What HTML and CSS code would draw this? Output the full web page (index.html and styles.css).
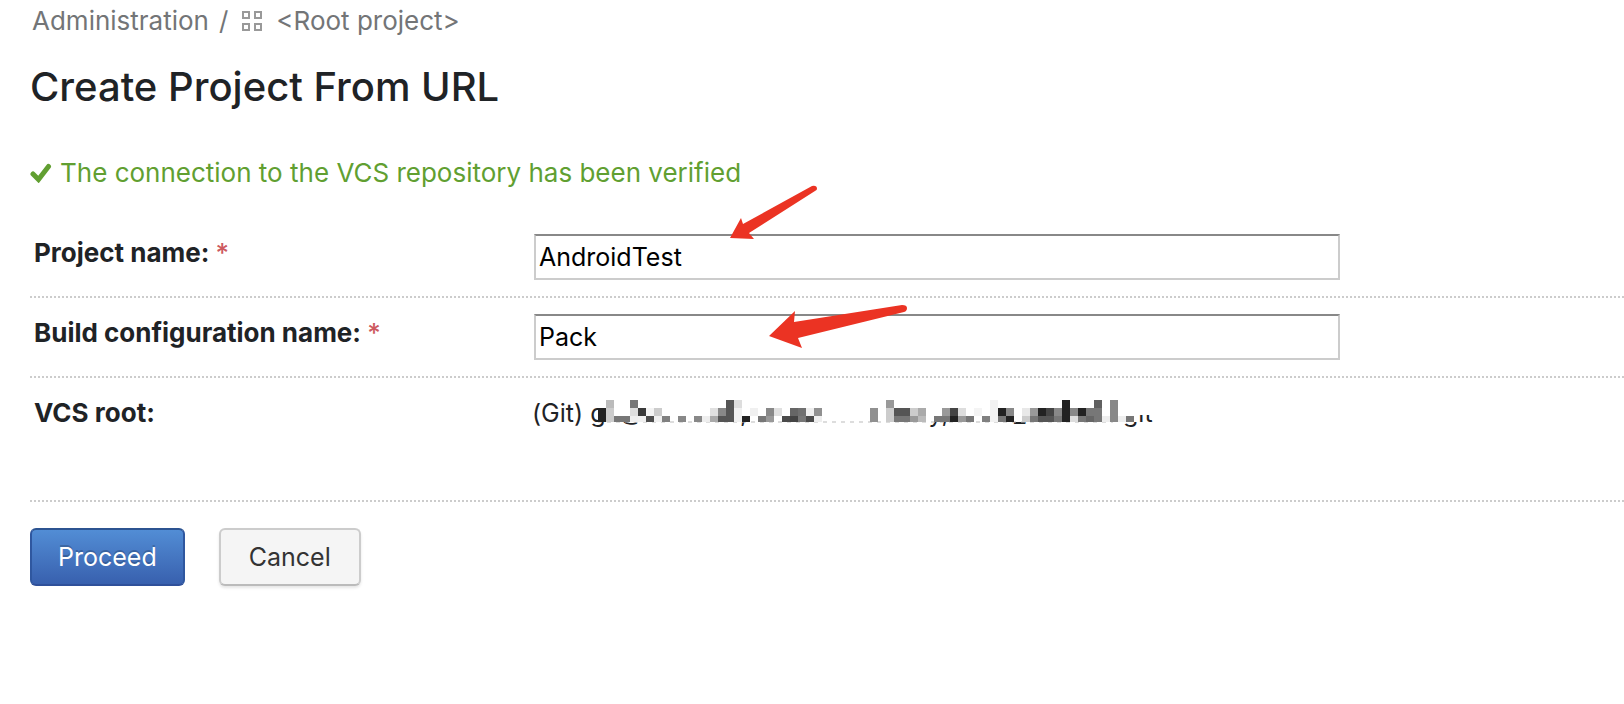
FILE: index.html
```html
<!DOCTYPE html>
<html lang="en">
<head>
<meta charset="utf-8">
<meta name="viewport" content="width=device-width, initial-scale=1">
<title>Create Project From URL</title>
<link rel="stylesheet" href="styles.css">
</head>
<body>
<main class="page">
  <nav class="breadcrumbs" aria-label="Breadcrumbs">
    <a href="#">Administration</a>
    <span class="separator">/</span>
    <a href="#" class="project-link">
      <svg class="project-icon" viewBox="0 0 20 20" aria-hidden="true"><path d="M1 1h6v6H1zM13 1h6v6h-6zM1 13h6v6H1zM13 13h6v6h-6z"/></svg>
      <span>&lt;Root project&gt;</span>
    </a>
  </nav>

  <h1 class="title">Create Project From URL</h1>

  <p class="status">
    <svg class="status-icon" viewBox="0 0 22 20" aria-hidden="true"><path d="M3 11L8.500 16.500L18.500 3.500"/></svg>
    <span>The connection to the VCS repository has been verified</span>
  </p>

  <form class="form">
    <div class="row">
      <label class="row-label" for="project-name">Project name: <span class="required">*</span></label>
      <div class="row-field">
        <input class="text-input" id="project-name" type="text" value="AndroidTest">
        <svg class="arrow arrow-project" viewBox="0 0 90 56" aria-hidden="true"><path d="M1 53L12 33L14 39L83 1Q88 0 88 4Q88 5 86 6L20 48L25 54Z"/></svg>
      </div>
    </div>
    <div class="row">
      <label class="row-label" for="build-name">Build configuration name: <span class="required">*</span></label>
      <div class="row-field">
        <input class="text-input" id="build-name" type="text" value="Pack">
        <svg class="arrow arrow-build" viewBox="0 0 140 46" aria-hidden="true"><path d="M1 32L27 7L26 18L134 1Q139 1 139 4Q139 7 136 8L30 34L34 44Z"/></svg>
      </div>
    </div>
    <div class="row row-root">
      <span class="row-label">VCS root:</span>
      <div class="row-field root-value">
        <span>(Git) g</span>
        <svg class="mosaic" viewBox="0 0 580 34" role="img" aria-label="Hidden repository address">
          <g class="mosaic-text">
            <text x="31" y="24">@</text>
            <text x="152" y="26">,</text>
            <text x="300" y="26">lawy,</text>
            <text x="426" y="26">_</text>
            <text x="535" y="26">git</text>
          </g>
          <path class="mosaic-mask" d="M10 0H580V19H550V26H10Z"/>
          <path class="mosaic-edge" d="M10 26H525"/>
          <g id="mosaic-cells"></g>
        </svg>
      </div>
    </div>
    <div class="actions">
      <button class="button button-primary" type="submit">Proceed</button>
      <button class="button button-plain" type="button">Cancel</button>
    </div>
  </form>
</main>
<script src="mosaic.js"></script>
</body>
</html>
```

FILE: styles.css
```css
* {
  box-sizing: border-box;
}

body {
  margin: 0;
  background: #fff;
  color: #1f2326;
  font-family: Inter, "Liberation Sans", sans-serif;
  font-size: 25px;
  line-height: 32px;
}

.page {
  padding: 5px 0 32px 30px;
}

.breadcrumbs {
  display: flex;
  gap: 10px;
  padding-left: 2px;
  color: #737577;
  font-size: 26px;
}

.breadcrumbs a {
  color: inherit;
  text-decoration: none;
}

.project-link {
  display: flex;
  align-items: center;
  gap: 14px;
  margin-left: 4px;
}

.project-icon {
  width: 20px;
  height: 20px;
  fill: none;
  stroke: #999;
  stroke-width: 2;
}

.title {
  margin: 26px 0 0;
  font-size: 40px;
  font-weight: 500;
  line-height: 48px;
}

.status {
  display: flex;
  align-items: center;
  gap: 8px;
  margin: 46px 0 0;
  color: #619f31;
  font-size: 26px;
}

.status-icon {
  width: 22px;
  height: 20px;
  fill: none;
  stroke: #619f31;
  stroke-width: 5;
  stroke-linecap: round;
}

.form {
  margin-top: 29px;
}

.row {
  display: grid;
  grid-template-columns: 500px minmax(0, 1fr);
  padding: 16px 0;
  border-bottom: 2px dotted #ccc;
}

.row-label {
  padding: 3px 4px 0;
  font-size: 26px;
  font-weight: 700;
}

.required {
  color: #cd5a5f;
  font-weight: 500;
}

.row-field {
  position: relative;
  padding-left: 4px;
}

.text-input {
  display: block;
  width: 806px;
  max-width: 100%;
  height: 46px;
  padding: 0 3px;
  border: 2px solid #ccc;
  border-top-color: #888;
  border-radius: 0;
  background: #fff;
  color: #000;
  font: inherit;
}

.arrow {
  position: absolute;
  fill: #eb3323;
}

.arrow-project {
  top: -49px;
  left: 199px;
  width: 90px;
  height: 56px;
}

.arrow-build {
  top: -10px;
  left: 238px;
  width: 140px;
  height: 46px;
}

.row-root {
  min-height: 124px;
}

.root-value {
  display: flex;
  align-items: flex-start;
  padding-top: 3px;
  padding-left: 2px;
}

.mosaic {
  position: absolute;
  top: 2px;
  left: 58px;
  width: 580px;
  height: 34px;
}

.mosaic-text {
  font-size: 25px;
  fill: #1f2326;
}

.mosaic-mask {
  fill: #fff;
}

.mosaic-edge {
  stroke: #bbb;
  stroke-width: 1;
  stroke-dasharray: 4 5;
}

.actions {
  display: flex;
  gap: 34px;
  padding-top: 26px;
}

.button {
  height: 58px;
  padding: 0 26px;
  border: 2px solid #ccc;
  border-radius: 6px;
  font: inherit;
}

.button-primary {
  border-color: #2c5391 #2f579f #2f509a;
  background: linear-gradient(#528dd5, #3860ae);
  color: #fff;
  text-shadow: 0 -2px 0 rgba(0, 0, 0, 0.2);
}

.button-plain {
  padding: 0 28px;
  border-bottom-color: #bbb;
  background: #f5f5f5;
  color: #333;
  box-shadow: 0 2px 3px rgba(0, 0, 0, 0.1);
}
```

FILE: mosaic.js
```javascript
// Each entry: column, then the grey level (hex digit pair) of the three rows; "--" is empty.
const cells = [
  "0 -- 22 22", "1 bb cc cc", "2 -- -- 77", "3 -- -- 77", "4 77 dd ee", "5 -- 3a f0",
  "6 -- f4 4d", "7 -- cc f0", "8 -- -- 80", "10 -- -- 88", "12 -- -- 88", "13 -- -- ee",
  "14 -- e0 aa", "15 -- 88 55", "16 55 55 55", "17 dd f0 f0", "18 -- -- 22", "19 -- f0 --",
  "20 -- -- 77", "21 -- 88 99", "22 -- e0 --", "23 -- -- 4a", "24 -- 66 44", "25 -- 70 77",
  "26 -- ee 4a", "27 -- 90 ee", "34 -- 90 90", "36 99 cc cc", "37 -- 55 77", "38 -- 55 77",
  "39 -- cc 99", "40 -- aa bb", "42 -- -- 77", "43 -- 99 77", "44 -- 44 22", "45 -- dd 99",
  "46 -- -- 77", "47 -- f4 --", "48 -- -- 80", "49 f2 f2 f2", "50 -- 22 77", "51 -- 88 22",
  "53 -- e8 cc", "54 -- 99 77", "55 -- 22 55", "56 -- 44 55", "57 -- 88 77", "58 22 22 22",
  "59 -- 88 dd", "60 -- 22 77", "61 -- 77 66", "62 60 77 77", "63 -- -- ee", "64 88 88 88",
  "65 -- -- ee", "66 -- -- 77"
];
const group = document.getElementById("mosaic-cells");
const heights = [8, 8, 6];
for (const cell of cells) {
  const [column, ...rows] = cell.split(" ");
  rows.forEach((grey, row) => {
    if (grey === "--") return;
    const rect = document.createElementNS("http://www.w3.org/2000/svg", "rect");
    rect.setAttribute("x", 10 + column * 8);
    rect.setAttribute("y", 4 + row * 8);
    rect.setAttribute("width", 8);
    rect.setAttribute("height", heights[row]);
    rect.setAttribute("fill", "#" + grey.repeat(3));
    group.append(rect);
  });
}
```
